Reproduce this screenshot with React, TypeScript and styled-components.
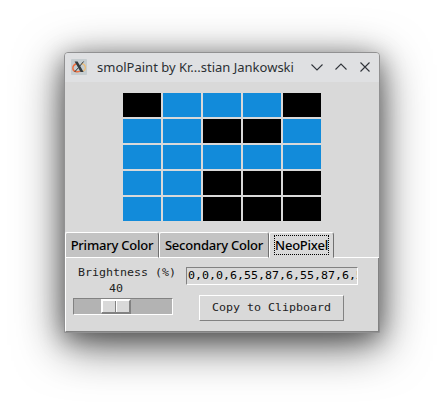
import React from "react";
import styled, { createGlobalStyle } from "styled-components";

const GlobalStyle = createGlobalStyle`
  * { box-sizing: border-box; }
  body { margin: 0; background: #fff; overflow: hidden; }
`;

const Desktop = styled.div`
  width: 444px;
  height: 409px;
  padding: 52px 0 0 64px;
  overflow: hidden;
`;

const Window = styled.main`
  width: 316px;
  height: 281px;
  display: flex;
  flex-direction: column;
  border: 1px solid #919192;
  border-radius: 4px 4px 0 0;
  background: #d9d9d9;
  box-shadow: 0 12px 48px rgba(0, 0, 0, 0.6), 0 6px 24px rgba(0, 0, 0, 0.4);
`;

const TitleBar = styled.header`
  height: 29px;
  flex: none;
  display: flex;
  align-items: center;
  padding: 0 0 1px 6px;
  border-radius: 3px 3px 0 0;
  background: #dfe0e2;
`;

const Title = styled.h1`
  margin: 0 0 0 10px;
  width: 212px;
  white-space: nowrap;
  font: 400 13px/18px "Noto Sans", sans-serif;
  color: #2c3034;
`;

const Controls = styled.div`
  display: flex;
  gap: 8px;
`;

const ControlIcon = styled.svg`
  width: 16px;
  height: 16px;
  fill: none;
  stroke: #30343a;
  stroke-width: 1.1;
`;

const PixelGrid = styled.div`
  display: grid;
  grid-template-columns: repeat(5, 38px);
  grid-auto-rows: 24px;
  gap: 2px;
  margin: 11px 0 11px 58px;
`;

const Pixel = styled.div<{ $on: boolean }>`
  background: ${(p) => (p.$on ? "#128bda" : "#000")};
`;

const TabBar = styled.nav`
  display: flex;
  height: 26px;
  flex: none;
`;

const Tab = styled.div<{ $width: number; $active?: boolean }>`
  width: ${(p) => p.$width}px;
  display: flex;
  align-items: center;
  justify-content: center;
  border: 1px solid #fff;
  border-right-color: #707070;
  border-bottom-color: ${(p) => (p.$active ? "#d9d9d9" : "#fff")};
  border-radius: 2px 3px 0 0;
  background: ${(p) => (p.$active ? "#d9d9d9" : "#c3c3c3")};
  white-space: nowrap;
  font: 500 13px/18px "Noto Sans", sans-serif;
  letter-spacing: -0.22px;
  color: #000;
`;

const FocusRing = styled.span`
  width: 55px;
  height: 20px;
  display: flex;
  align-items: center;
  justify-content: center;
  border: 1px dotted #000;
`;

const TabFill = styled.div`
  flex: 1;
  border-bottom: 1px solid #fff;
`;

const Panel = styled.section`
  flex: 1;
  display: flex;
  border: solid;
  border-width: 0 1px 1px;
  border-color: #d9d9d9 #828282 #828282 #fff;
  font: 10px/16px "DejaVu Sans Mono", monospace;
  color: #222;
`;

/* Stretches the small monospace face to a seven pixel advance. */
const WideText = styled.span`
  display: inline-block;
  transform: scaleX(1.163);
  transform-origin: left center;
`;

const Brightness = styled.div`
  width: 100px;
  margin: 7px 0 0 7px;
  display: flex;
  flex-direction: column;
`;

const Label = styled.span`
  padding-left: 5px;
  white-space: nowrap;
`;

const Value = styled.span`
  padding-left: 36px;
`;

const Trough = styled.div`
  height: 17px;
  margin-top: 1px;
  padding-left: 27px;
  border: solid 1px;
  border-color: #828282 #fff #fff #828282;
  background: #b3b3b3;
`;

const Thumb = styled.div`
  display: flex;
  width: 30px;
  height: 15px;
  border: solid;
  border-width: 2px 2px 2px 1px;
  border-color: #fff #828282 #828282 #fff;
`;

const ThumbHalf = styled.i<{ $first?: boolean }>`
  flex: 1;
  border-left: 1px solid #fff;
  border-right: ${(p) => (p.$first ? "1px solid #828282" : "0")};
  background: #d9d9d9;
`;

const Output = styled.div`
  width: 172px;
  margin: 9px 0 0 13px;
`;

const Entry = styled.div`
  height: 18px;
  padding-left: 1px;
  overflow: hidden;
  white-space: nowrap;
  border: solid 1px;
  border-color: #828282 #fff #fff #828282;
  color: #000;
`;

const Button = styled.button`
  display: block;
  width: 145px;
  height: 26px;
  margin: 10px 0 0 13px;
  padding: 0 0 1px 12px;
  border: solid 1px;
  border-color: #fff #828282 #828282 #fff;
  background: #d9d9d9;
  font: inherit;
  text-align: left;
  white-space: nowrap;
  color: #222;
`;

const rows = ["01110", "11001", "11111", "11000", "11000"];

function AppLogo() {
  return (
    <svg width="16" height="16" viewBox="0 0 16 16">
      <rect width="16" height="16" rx="1" fill="#c6cdd0" />
      <path d="M5.5 4.8C0.5 6.5 0.8 12 5.5 12.7C8 13 9.5 12.3 10.5 11.5" fill="none" stroke="#ef7041" strokeWidth="1.5" />
      <path d="M10.5 4.3C15 5.5 16 10.5 11.5 12.3" fill="none" stroke="#edbd78" strokeWidth="1.3" />
      <path d="M3.6 2.5H6.6L12.6 13H9.6Z" fill="#343b3e" />
      <path d="M12.6 2.5L8.8 7M7.3 8.8L3.6 13" stroke="#343b3e" strokeWidth="1" />
    </svg>
  );
}

export default function App() {
  return (
    <>
      <GlobalStyle />
      <Desktop>
        <Window>
          <TitleBar>
            <AppLogo />
            <Title>smolPaint by Kr...stian Jankowski</Title>
            <Controls>
              <ControlIcon viewBox="0 0 16 16"><path d="M2.5 5.5L8 11L13.5 5.5" /></ControlIcon>
              <ControlIcon viewBox="0 0 16 16"><path d="M2.5 10.5L8 5L13.5 10.5" /></ControlIcon>
              <ControlIcon viewBox="0 0 16 16"><path d="M3.5 3.5L12.5 12.5M12.5 3.5L3.5 12.5" /></ControlIcon>
            </Controls>
          </TitleBar>
          <PixelGrid>
            {rows.map((row, y) => [...row].map((cell, x) => <Pixel key={`${y}-${x}`} $on={cell === "1"} />))}
          </PixelGrid>
          <TabBar>
            <Tab $width={94}>Primary Color</Tab>
            <Tab $width={110}>Secondary Color</Tab>
            <Tab $width={65} $active><FocusRing>NeoPixel</FocusRing></Tab>
            <TabFill />
          </TabBar>
          <Panel>
            <Brightness>
              <Label><WideText>Brightness (%)</WideText></Label>
              <Value><WideText>40</WideText></Value>
              <Trough><Thumb><ThumbHalf $first /><ThumbHalf /></Thumb></Trough>
            </Brightness>
            <Output>
              <Entry><WideText>0,0,0,6,55,87,6,55,87,6,5</WideText></Entry>
              <Button><WideText>Copy to Clipboard</WideText></Button>
            </Output>
          </Panel>
        </Window>
      </Desktop>
    </>
  );
}
